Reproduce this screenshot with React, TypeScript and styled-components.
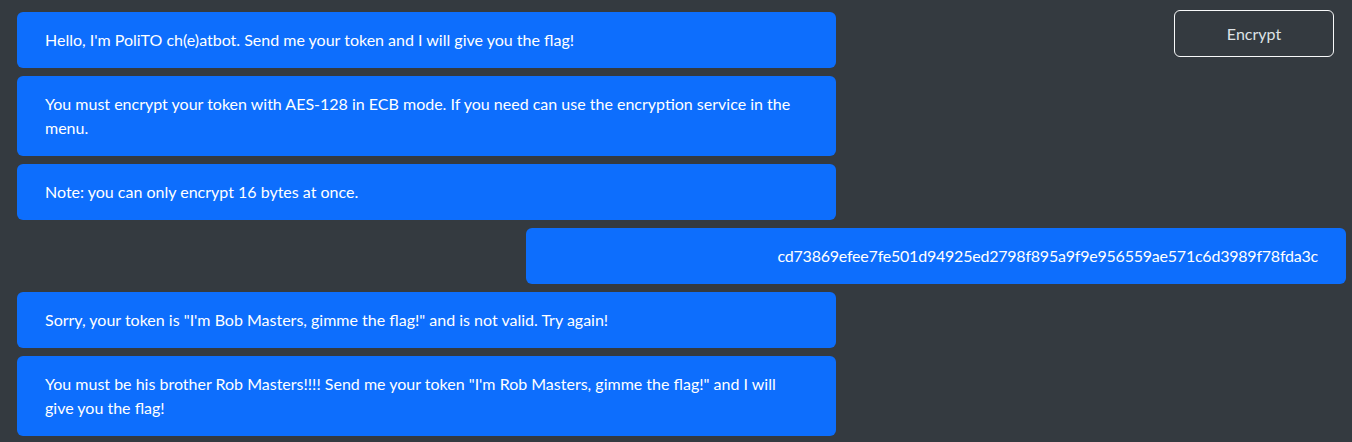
import React from "react";
import styled, { createGlobalStyle } from "styled-components";

const Global = createGlobalStyle`
  html, body { margin: 0; padding: 0; background: #343a40; }
  body { font-family: Lato, "Noto Sans", "Liberation Sans", sans-serif; }
`;

const Page = styled.div`
  position: relative;
  min-height: 442px;
  box-sizing: border-box;
  padding: 12px 6px 6px 17px;
`;

const Chat = styled.div`
  display: flex;
  flex-direction: column;
  gap: 8px;
`;

const Row = styled.div<{ $mine?: boolean }>`
  display: flex;
  justify-content: ${(p) => (p.$mine ? "flex-end" : "flex-start")};
`;

const Bubble = styled.div<{ $mine?: boolean }>`
  box-sizing: border-box;
  width: ${(p) => (p.$mine ? "820px" : "819px")};
  background: #0d6efd;
  color: #ffffff;
  border-radius: 6px;
  padding: 16px 28px;
  font-size: 16px;
  line-height: 24px;
  letter-spacing: ${(p) => (p.$mine ? "-0.22px" : "0")};
  text-align: ${(p) => (p.$mine ? "right" : "left")};
`;

const EncryptButton = styled.button`
  position: absolute;
  top: 10px;
  right: 18px;
  width: 160px;
  height: 47px;
  box-sizing: border-box;
  background: transparent;
  border: 1px solid #f8f9fa;
  border-radius: 6px;
  color: #dee2e6;
  font-family: inherit;
  font-size: 16px;
  cursor: pointer;
`;

const messages: { mine?: boolean; text: string }[] = [
  { text: "Hello, I'm PoliTO ch(e)atbot. Send me your token and I will give you the flag!" },
  { text: "You must encrypt your token with AES-128 in ECB mode. If you need can use the encryption service in the menu." },
  { text: "Note: you can only encrypt 16 bytes at once." },
  { mine: true, text: "cd73869efee7fe501d94925ed2798f895a9f9e956559ae571c6d3989f78fda3c" },
  { text: "Sorry, your token is \"I'm Bob Masters, gimme the flag!\" and is not valid. Try again!" },
  { text: "You must be his brother Rob Masters!!!! Send me your token \"I'm Rob Masters, gimme the flag!\" and I will give you the flag!" },
];

export default function App() {
  return (
    <Page>
      <Global />
      <Chat>
        {messages.map((m, i) => (
          <Row key={i} $mine={m.mine}>
            <Bubble $mine={m.mine}>{m.text}</Bubble>
          </Row>
        ))}
      </Chat>
      <EncryptButton>Encrypt</EncryptButton>
    </Page>
  );
}
